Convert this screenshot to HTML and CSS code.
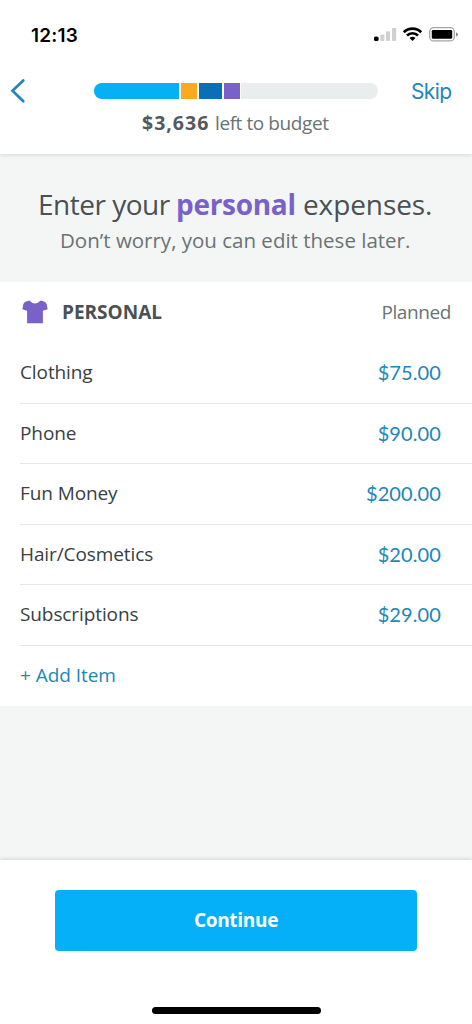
FILE: index.html
```html
<!DOCTYPE html>
<html lang="en">
<head>
<meta charset="utf-8">
<title>Personal expenses</title>
<link rel="stylesheet" href="styles.css">
</head>
<body>
<div class="screen">
  <header class="header">
    <div class="status">
      <span class="time">12:13</span>
      <svg class="status-icons" width="86" height="18" viewBox="0 0 86 18">
        <rect x="2" y="10.5" width="4.6" height="4.6" rx="1.6" fill="#000"/>
        <rect x="8.4" y="8.5" width="4" height="6.6" rx=".8" fill="#d0d0d0"/>
        <rect x="14" y="5.3" width="4" height="9.8" rx=".8" fill="#d0d0d0"/>
        <rect x="20" y="2" width="4.2" height="13.1" rx=".8" fill="#d0d0d0"/>
        <g fill="none" stroke="#000" stroke-width="2.7">
          <path d="M31.8 6.2A12.4 12.4 0 0 1 49.2 6.2"/>
          <path d="M35 9.5A7.8 7.8 0 0 1 46 9.5"/>
        </g>
        <path d="M37.5 12.1A4.3 4.3 0 0 1 43.5 12.1L40.5 15.1Z" fill="#000"/>
        <rect x="57.7" y="1.7" width="24.6" height="13.2" rx="4" fill="none" stroke="#a5a5a5" stroke-width="1.3"/>
        <rect x="59.8" y="3.9" width="20.4" height="8.9" rx="1.4" fill="#000"/>
        <path d="M84 6.2Q86 7 86 8.4T84 10.6Z" fill="#888"/>
      </svg>
    </div>
    <div class="nav">
      <svg class="back" width="16" height="26" viewBox="0 0 16 26"><path d="M13.3 2.5 2.5 12.8 13.3 23.2" fill="none" stroke="#2186b8" stroke-width="2.7" stroke-linecap="round"/></svg>
      <div class="progress">
        <span class="seg-sky"></span><span class="seg-orange"></span><span class="seg-blue"></span><span class="seg-purple"></span>
      </div>
      <a class="skip">Skip</a>
    </div>
    <p class="left"><b>$3,636</b><span>left to budget</span></p>
  </header>
  <section class="hero">
    <h1><span class="enter">Enter your</span><b>personal</b><span class="expenses">expenses.</span></h1>
    <p class="hint">Don’t worry, you can edit these later.</p>
  </section>
  <section class="card">
    <div class="card-head">
      <svg class="shirt" width="26" height="24" viewBox="0 0 26 24"><path d="M7.3.5Q13 6.4 18.7.5L22 1.5Q24 2.1 24.6 4L25.7 9.2 20.9 10.7V23.3H5.1V10.7L.3 9.2 1.4 4Q2 2.1 4 1.5Z" fill="#7a61c9"/></svg>
      <h2>PERSONAL</h2>
      <span class="planned">Planned</span>
    </div>
    <ul class="items">
      <li><span>Clothing</span><span class="amount">$75.00</span></li>
      <li><span>Phone</span><span class="amount">$90.00</span></li>
      <li><span>Fun Money</span><span class="amount">$200.00</span></li>
      <li><span>Hair/Cosmetics</span><span class="amount">$20.00</span></li>
      <li><span>Subscriptions</span><span class="amount">$29.00</span></li>
    </ul>
    <a class="add">+ Add Item</a>
  </section>
  <footer class="footer">
    <button class="continue">Continue</button>
    <div class="home"></div>
  </footer>
</div>
</body>
</html>
```
FILE: styles.css
```css
* { box-sizing: border-box; margin: 0; padding: 0; }
body { font-family: "Open Sans", "Noto Sans", sans-serif; background: #f4f6f6; }
.screen { width: 472px; height: 1024px; display: flex; flex-direction: column; background: #f4f6f6; overflow: hidden; }
.header { height: 154px; background: #fff; box-shadow: 0 1px 4px rgba(0,0,0,.13); flex: none; }
.status { height: 70px; display: flex; justify-content: space-between; align-items: center; padding: 0 14px 0 31px; }
.time { font: 600 19px "Inter", sans-serif; letter-spacing: .2px; color: #000; }
.nav { height: 42px; margin-bottom: -2px; display: flex; align-items: center; padding-left: 10px; }
.back { flex: none; }
.progress { margin-left: 68px; width: 284px; height: 16px; border-radius: 8px; background: #e9eded; overflow: hidden; display: flex; gap: 2px; flex: none; }
.seg-sky { width: 85px; background: #05b0f5; box-shadow: 2px 0 #fff; }
.seg-orange { width: 16px; background: #fbaa20; box-shadow: 2px 0 #fff; }
.seg-blue { width: 23px; background: #0a70b6; box-shadow: 2px 0 #fff; }
.seg-purple { width: 16px; background: #7a61c9; box-shadow: 1px 0 #fff; }
.skip { font: 400 21px "Inter", sans-serif; letter-spacing: -.6px; color: #2186b8; margin-left: 33px; }
.left { line-height: 26px; color: #6a7274; display: flex; padding-left: 142px; white-space: nowrap; }
.left b { font-size: 19.5px; color: #55595c; letter-spacing: 1px; width: 73px; }
.left span { font-size: 19px; letter-spacing: -.42px; }
.hero { height: 128px; padding-top: 31px; flex: none; color: #4a5053; }
h1 { font-weight: 400; font-size: 28px; line-height: 38px; display: flex; padding-left: 38px; white-space: nowrap; letter-spacing: -.5px; }
.enter { width: 138px; }
.expenses { letter-spacing: -.1px; }
h1 b { color: #7a61c9; width: 127px; letter-spacing: -.3px; }
.hint { font-size: 20.5px; line-height: 34px; color: #6a7274; padding-left: 60px; white-space: nowrap; }
.card { background: #fff; height: 424px; flex: none; }
.card-head { height: 60px; display: flex; align-items: center; padding: 0 21px 0 22px; }
h2 { font-size: 19px; color: #4a5053; margin-left: 14px; }
.planned { margin-left: auto; font-size: 19px; letter-spacing: -.4px; color: #6a7274; }
.items { list-style: none; padding: 1px 0 0 20px; }
.items li { height: 60.5px; border-bottom: 1px solid #e4e6e7; display: flex; justify-content: space-between; align-items: center; padding: 0 31px 1px 0; font-size: 19px; letter-spacing: -.1px; color: #3a4043; }
.amount { font: 20px "Lato", sans-serif; letter-spacing: .1px; color: #2186b8; }
.add { display: inline-block; padding-left: 20px; font-size: 19px; line-height: 58px; letter-spacing: -.05px; color: #2186b8; }
.footer { margin-top: auto; height: 164px; background: #fff; box-shadow: 0 -1px 4px rgba(0,0,0,.13); padding-top: 30px; display: flex; flex-direction: column; align-items: center; flex: none; }
.continue { width: 362px; height: 61px; border: 0; border-radius: 4px; background: #05b0f8; color: #fff; font: 700 19px "Open Sans", sans-serif; letter-spacing: -.3px; padding-bottom: 2px; }
.home { width: 169px; height: 7px; border-radius: 4px; background: #000; margin-top: 56px; }
```
